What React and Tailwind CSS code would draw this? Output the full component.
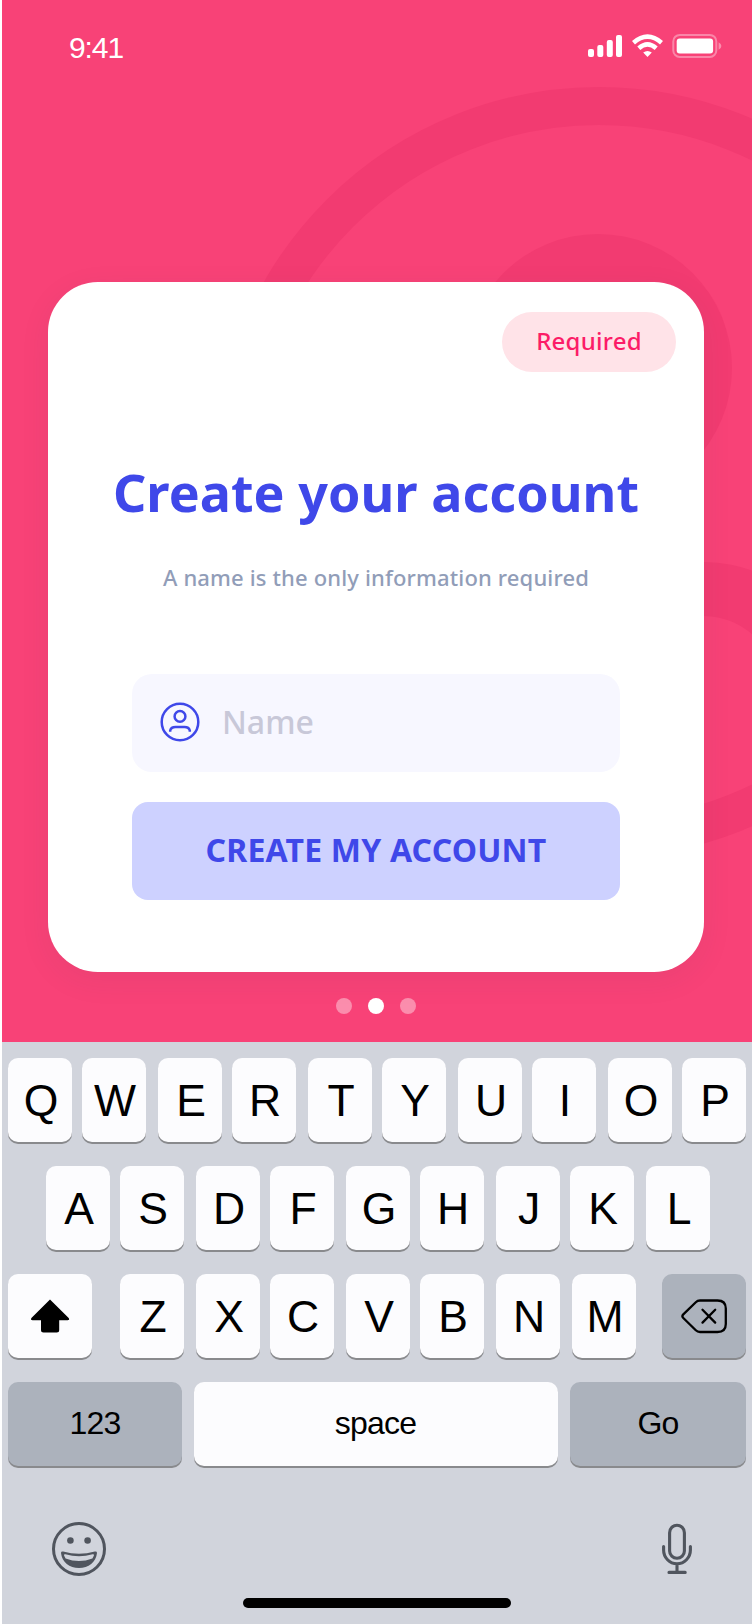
const KEY_BASE =
  "flex h-[84px] shrink-0 items-center justify-center rounded-[10px] shadow-[0_2px_0_#898a8d]";

function LetterKey({ letter, gap }) {
  return (
    <button className={`${KEY_BASE} ${gap} w-16 bg-[#fcfcfe] pl-0.5 text-[44.5px] leading-none`}>
      <span className="relative top-px">{letter}</span>
    </button>
  );
}

function LetterKeys({ letters, wideFirst = false }) {
  return letters.split("").map((letter, i) => {
    const isWide = wideFirst ? i % 2 === 1 || letter === "M" : i % 2 === 0;
    const gap = i === 0 ? "" : isWide ? "ml-3" : "ml-2.5";
    return <LetterKey key={letter} letter={letter} gap={gap} />;
  });
}

function StatusIcons() {
  return (
    <svg className="mt-[32px] h-7 w-[136px]" viewBox="586 32 136 28" fill="none">
      <g fill="#fff">
        <rect x="588" y="49" width="6" height="8" rx="2" />
        <rect x="597.3" y="45" width="6" height="12" rx="2" />
        <rect x="606.8" y="40" width="6" height="17" rx="2" />
        <rect x="616" y="35" width="6" height="22" rx="2" />
        <path d="M647.5 57 L643.2 52.6 Q647.5 49.2 651.8 52.6 Z" />
      </g>
      <g stroke="#fff" strokeWidth="4.5">
        <path d="M633.5 42.8 Q647.5 30.6 661.5 42.8" />
        <path d="M638.8 48.3 Q647.5 40.6 656.2 48.3" />
      </g>
      <rect x="673.3" y="34.9" width="43" height="22" rx="6.5" stroke="#fff" strokeOpacity=".36" strokeWidth="2" />
      <rect x="676.7" y="38.4" width="36.4" height="15" rx="3" fill="#fff" />
      <path d="M718.6 42.2 Q721.4 43.6 721.4 46 Q721.4 48.4 718.6 49.8 Z" fill="#fff" fillOpacity=".4" />
    </svg>
  );
}

function Backdrop() {
  return (
    <svg className="absolute inset-0 h-[1042px] w-[750px]" viewBox="2 0 750 1042" fill="none">
      <circle cx="599" cy="472.5" r="366.5" stroke="#f23b71" strokeWidth="38" />
      <circle cx="598" cy="368" r="134" fill="#f23b71" />
      <path
        d="M600 562 H704 A140 140 0 0 1 844 702 H782 A78 86 0 0 0 704 616 H600 Z"
        fill="#f23b71"
      />
    </svg>
  );
}

function UserIcon() {
  return (
    <svg className="h-10 w-10" viewBox="0 0 40 40" fill="none" stroke="#3f48e9" strokeWidth="2.5">
      <circle cx="20" cy="20" r="18.3" />
      <circle cx="20" cy="14.4" r="5.4" />
      <path d="M10.2 28.5 Q11 25 15.5 25 H24.5 Q29 25 29.8 28.5 V29.8 M10.2 28.3 V29.8" />
    </svg>
  );
}

function ShiftIcon() {
  return (
    <svg className="h-[34px] w-10" viewBox="30 1298 40 34">
      <path d="M50 1298.6 L68.7 1317 Q70 1319.2 67.5 1319.2 H59.2 V1329 Q59.2 1331.5 56.7 1331.5 H43.5 Q41 1331.5 41 1329 V1319.2 H32.6 Q30.2 1319.2 31.4 1317 Z" />
    </svg>
  );
}

function DeleteIcon() {
  return (
    <svg
      className="h-9 w-12"
      viewBox="680 1298 48 36"
      fill="none"
      stroke="#000"
      strokeWidth="2.3"
      strokeLinecap="round"
      strokeLinejoin="round"
    >
      <path d="M700 1300.5 H717.5 Q725.8 1300.5 725.8 1308.5 V1324 Q725.8 1332 717.5 1332 H700 Q697.5 1332 695.8 1330.3 L683.3 1318 Q681.5 1316.2 683.3 1314.4 L695.8 1302.2 Q697.5 1300.5 700 1300.5 Z" />
      <path d="M702.5 1309.8 L715.2 1322.6 M715.2 1309.8 L702.5 1322.6" />
    </svg>
  );
}

function SmileIcon() {
  return (
    <svg className="h-14 w-14" viewBox="51 1521 56 56" fill="none">
      <circle cx="79" cy="1549" r="25.5" stroke="#50555e" strokeWidth="3" />
      <circle cx="70.4" cy="1540.5" r="3.3" fill="#50555e" />
      <circle cx="87.6" cy="1540.5" r="3.3" fill="#50555e" />
      <path
        fill="#50555e"
        fillRule="evenodd"
        d="M61 1553 Q61 1551.2 63.2 1551.6 Q79 1556 94.8 1551.6 Q97 1551.2 97 1553 C96 1562 88.5 1568 79 1568 C69.5 1568 62 1562 61 1553 Z M63.9 1555 Q64.6 1557 65.6 1558.4 Q79 1563.4 92.4 1558.4 Q93.4 1557 94.1 1555 Q93.8 1554 92.6 1554.3 Q79 1558 65.4 1554.3 Q64.2 1554 63.9 1555 Z"
      />
    </svg>
  );
}

function MicIcon() {
  return (
    <svg
      className="mt-0.5 h-[52px] w-8"
      viewBox="661 1523 32 52"
      fill="none"
      stroke="#50555e"
      strokeWidth="3.1"
      strokeLinecap="round"
    >
      <rect x="669.6" y="1525.3" width="14.8" height="33" rx="7.4" />
      <path d="M663.6 1546.5 V1550 A13.4 13.8 0 0 0 690.4 1550 V1546.5 M677 1564 V1572.4 M669 1572.4 H685.2" />
    </svg>
  );
}

export default function App() {
  return (
    <div className="h-[1624px] w-[752px] overflow-hidden bg-white pl-0.5 font-['Liberation_Sans',sans-serif]">
      <section className="relative h-[1042px] overflow-hidden bg-[#f84277]">
        <Backdrop />
        <div className="relative flex h-full flex-col items-center pr-0.5">
          <header className="flex h-[282px] w-full justify-between pr-7 pl-[67px] text-white">
            <span className="mt-[30px] text-[30px] leading-9 tracking-[-1.1px]">9:41</span>
            <StatusIcons />
          </header>

          <main className="flex h-[690px] w-[656px] shrink-0 flex-col rounded-[50px] bg-white font-['Noto_Sans',sans-serif] shadow-[0_8px_32px_rgba(50,60,70,0.065)]">
            <div className="mt-[30px] mr-7 flex h-[60px] w-[174px] items-center justify-center self-end rounded-full bg-[#ffe3e8] pb-0.5 text-2xl font-medium tracking-[0.25px] text-[#fc1c67]">
              Required
            </div>
            <h1 className="mt-[84px] text-center text-[52px] leading-[72px] font-bold tracking-[0.05px] whitespace-nowrap text-[#3f48e9]">
              Create your account
            </h1>
            <p className="mt-[33px] text-center text-[22px] leading-8 font-medium tracking-[0.15px] whitespace-nowrap text-[#919db8]">
              A name is the only information required
            </p>
            <form className="mx-auto mt-[81px] flex w-[488px] flex-col gap-[30px]">
              <label className="flex h-[98px] items-center gap-[22px] rounded-[20px] bg-[#f7f7ff] pb-0.5 pl-7 text-[32px] font-medium text-[#c8c8d8]">
                <UserIcon />
                <span>Name</span>
              </label>
              <button
                type="button"
                className="h-[98px] rounded-2xl bg-[#cdd1ff] pb-0.5 text-[32px] font-bold tracking-[0.18px] text-[#3f48e9]"
              >
                CREATE MY ACCOUNT
              </button>
            </form>
          </main>

          <div className="mt-[26px] flex gap-4">
            <span className="size-4 rounded-full bg-white/40" />
            <span className="size-4 rounded-full bg-white" />
            <span className="size-4 rounded-full bg-white/40" />
          </div>
        </div>
      </section>

      <section className="flex h-[582px] flex-col bg-[#d1d4dc] px-1.5 pt-4 text-black">
        <div className="flex flex-col gap-6">
          <div className="flex">
            <LetterKeys letters="QWERTYUIOP" />
          </div>
          <div className="flex pl-[38px]">
            <LetterKeys letters="ASDFGHJKL" />
          </div>
          <div className="flex">
            <button className={`${KEY_BASE} mr-7 w-[84px] bg-[#fcfcfe]`}>
              <ShiftIcon />
            </button>
            <LetterKeys letters="ZXCVBNM" wideFirst />
            <button className={`${KEY_BASE} ml-[26px] w-[84px] bg-[#acb2bc]`}>
              <DeleteIcon />
            </button>
          </div>
          <div className="flex gap-3 text-[32px] tracking-[-0.8px]">
            <button className={`${KEY_BASE} w-[174px] bg-[#acb2bc] pb-0.5`}>123</button>
            <button className={`${KEY_BASE} w-[364px] bg-[#fcfcfe] pr-px pb-0.5`}>space</button>
            <button className={`${KEY_BASE} w-44 bg-[#acb2bc] pb-0.5`}>Go</button>
          </div>
        </div>
        <div className="mt-[55px] flex items-start justify-between pr-[53px] pl-[43px]">
          <SmileIcon />
          <MicIcon />
        </div>
        <div className="mt-[21px] ml-[235px] h-2.5 w-[268px] rounded-full bg-black" />
      </section>
    </div>
  );
}
